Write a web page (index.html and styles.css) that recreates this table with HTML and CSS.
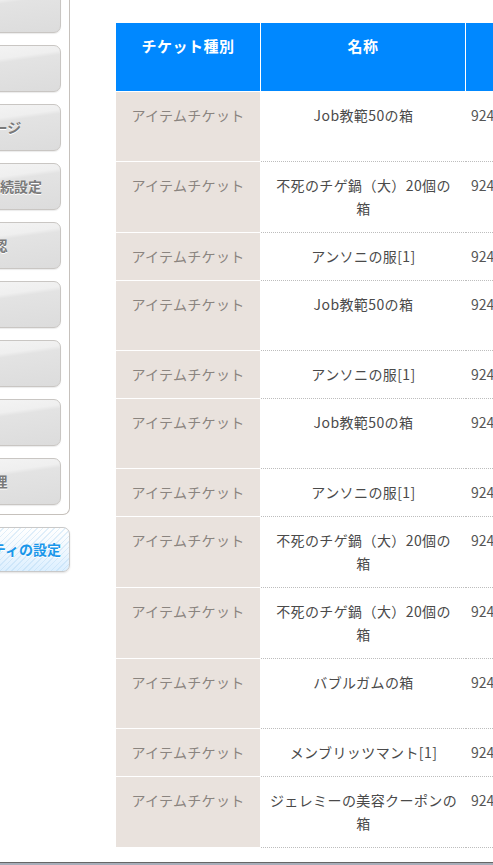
FILE: index.html
```html
<!DOCTYPE html>
<html lang="ja">
<head>
<meta charset="utf-8">
<title>チケット一覧</title>
<link rel="stylesheet" href="styles.css">
</head>
<body>
<div class="page">
  <aside class="sidebar">
    <nav class="menu">
      <a class="menu-btn">戻る</a>
      <a class="menu-btn">検索</a>
      <a class="menu-btn">ホームページ</a>
      <a class="menu-btn">プレミアム継続設定</a>
      <a class="menu-btn">購入確認</a>
      <a class="menu-btn">購入</a>
      <a class="menu-btn">履歴</a>
      <a class="menu-btn">設定</a>
      <a class="menu-btn">履歴管理</a>
    </nav>
    <a class="party-btn">パーティの設定</a>
  </aside>
  <main class="main">
    <table class="tickets">
      <thead>
        <tr class="head">
          <th class="c-type">チケット種別</th>
          <th class="c-name">名称</th>
          <th class="c-code">シリアル番号</th>
        </tr>
      </thead>
      <tbody>
        <tr class="tall"><td class="c-type">アイテムチケット</td><td class="c-name">Job教範50の箱</td><td class="c-code">9241873502</td></tr>
        <tr><td class="c-type">アイテムチケット</td><td class="c-name">不死のチゲ鍋（大）20個の<br>箱</td><td class="c-code">9241873503</td></tr>
        <tr><td class="c-type">アイテムチケット</td><td class="c-name">アンソニの服[1]</td><td class="c-code">9241873504</td></tr>
        <tr class="tall"><td class="c-type">アイテムチケット</td><td class="c-name">Job教範50の箱</td><td class="c-code">9241873505</td></tr>
        <tr><td class="c-type">アイテムチケット</td><td class="c-name">アンソニの服[1]</td><td class="c-code">9241873506</td></tr>
        <tr class="tall"><td class="c-type">アイテムチケット</td><td class="c-name">Job教範50の箱</td><td class="c-code">9241873507</td></tr>
        <tr><td class="c-type">アイテムチケット</td><td class="c-name">アンソニの服[1]</td><td class="c-code">9241873508</td></tr>
        <tr><td class="c-type">アイテムチケット</td><td class="c-name">不死のチゲ鍋（大）20個の<br>箱</td><td class="c-code">9241873509</td></tr>
        <tr><td class="c-type">アイテムチケット</td><td class="c-name">不死のチゲ鍋（大）20個の<br>箱</td><td class="c-code">9241873510</td></tr>
        <tr class="tall"><td class="c-type">アイテムチケット</td><td class="c-name">バブルガムの箱</td><td class="c-code">9241873511</td></tr>
        <tr><td class="c-type">アイテムチケット</td><td class="c-name">メンブリッツマント[1]</td><td class="c-code">9241873512</td></tr>
        <tr><td class="c-type">アイテムチケット</td><td class="c-name">ジェレミーの美容クーポンの<br>箱</td><td class="c-code">9241873513</td></tr>
      </tbody>
    </table>
  </main>
</div>
<footer class="footer"></footer>
</body>
</html>
```

FILE: styles.css
```css
html, body {
  margin: 0;
  padding: 0;
  background: #fff;
  overflow: hidden;
  font-family: "Noto Sans CJK JP", "Noto Sans", sans-serif;
}

.page {
  display: flex;
  align-items: flex-start;
  margin-left: -110px;
  margin-top: -24px;
}

.sidebar {
  flex: none;
  width: 180px;
}

.menu {
  display: flex;
  flex-direction: column;
  gap: 12px;
  padding: 10px 8px 9px 8px;
  border-right: 1px solid #c6c1bc;
  border-bottom: 1px solid #c6c1bc;
  border-bottom-right-radius: 7px;
  background: #fff;
}

.menu-btn {
  display: block;
  height: 45px;
  line-height: 45px;
  border: 1px solid #c9c6c3;
  border-radius: 7px;
  background: linear-gradient(172deg, #f7f7f7 0%, #efefef 40%, #e3e3e3 46%, #dcdcdc 100%);
  box-shadow: 0 1px 1px rgba(0,0,0,0.08);
  text-align: center;
  font-size: 14px;
  font-weight: bold;
  color: #7a7a7a;
  text-shadow: 0 1px 0 #fff;
  white-space: nowrap;
}

.party-btn {
  display: block;
  margin-top: 12px;
  height: 43px;
  line-height: 43px;
  border: 1px solid #c9c9c9;
  border-radius: 7px;
  background:
    repeating-linear-gradient(135deg, rgba(255,255,255,0) 0 3px, rgba(170,210,240,0.35) 3px 4px),
    linear-gradient(#ffffff 0%, #f3f9fe 45%, #dcefff 100%);
  box-shadow: 0 1px 2px rgba(0,0,0,0.12);
  text-align: right;
  padding-right: 8px;
  font-size: 14px;
  font-weight: bold;
  color: #1a97ea;
  text-shadow: 0 1px 0 #fff;
  white-space: nowrap;
}

.main {
  flex: none;
  margin-left: 46px;
  padding-top: 47px;
}

.tickets {
  table-layout: fixed;
  width: 570px;
  border-collapse: separate;
  border-spacing: 0;
  font-size: 14px;
}

.tickets th,
.tickets td {
  padding: 0;
  vertical-align: top;
}

.tickets .head {
  height: 69px;
}

.tickets th {
  background: #0088ff;
  color: #fff;
  font-size: 15px;
  font-weight: bold;
  line-height: 20px;
  padding-top: 13px;
  text-align: center;
  letter-spacing: 0.5px;
  border-right: 1px solid #fff;
  border-bottom: 1px solid #fff;
}

.tickets th.c-type { width: 144px; }
.tickets th.c-name { width: 204px; }
.tickets th.c-code { width: 220px; }

.tickets td {
  line-height: 23px;
  padding-top: 12px;
  padding-bottom: 12px;
}

.tickets td.c-type {
  background: #e9e2dd;
  color: #8a847f;
  text-align: center;
  letter-spacing: 0.3px;
  border-right: 1px solid #fff;
  border-bottom: 1px solid #fff;
}

.tickets td.c-name {
  color: #4a4a4a;
  text-align: center;
  letter-spacing: 0.4px;
  padding-left: 5px;
  padding-right: 5px;
  border-bottom: 1px dotted #bdbdbd;
}

.tickets td.c-code {
  color: #555;
  text-align: left;
  padding-left: 5px;
  border-bottom: 1px dotted #bdbdbd;
}

.tickets tr.tall {
  height: 70px;
}

.footer {
  margin-top: 14px;
  height: 3px;
  border-top: 1px solid #666;
  background: #a7adb9;
}
```
